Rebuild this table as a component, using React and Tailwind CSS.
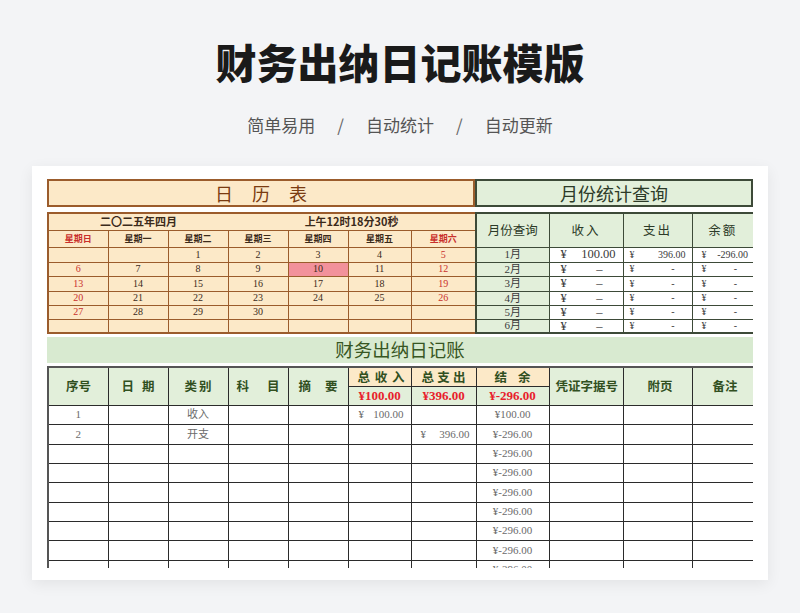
import React from "react";

const cjk = "font-['Noto_Sans_CJK_SC',sans-serif]";
const serif = "font-['Liberation_Serif','Noto_Sans_CJK_SC',serif]";

const weekdays = ["星期日", "星期一", "星期二", "星期三", "星期四", "星期五", "星期六"];
const weeks = [
  ["", "", "1", "2", "3", "4", "5"],
  ["6", "7", "8", "9", "10", "11", "12"],
  ["13", "14", "15", "16", "17", "18", "19"],
  ["20", "21", "22", "23", "24", "25", "26"],
  ["27", "28", "29", "30", "", "", ""],
  ["", "", "", "", "", "", ""],
];
const rowH = ["h-[15px]", "h-[14px]", "h-[15px]", "h-[14px]", "h-[14px]", "h-[14px]"];
const calCols = ["w-[60px]", "w-[60px]", "w-[60px]", "w-[60px]", "w-[60px]", "w-[63px]", "w-[65px]"];
const monthCols = ["w-[73px]", "w-[74px]", "w-[69px]", "w-[62px]"];
const months = ["1月", "2月", "3月", "4月", "5月", "6月"];

const Calendar = () => {
  return (
    <div className="w-[428px]">
      <div className="h-[28px] border-2 border-[#9b5c2c] bg-[#fce9c8] flex items-center justify-center gap-[19px] text-[18px] text-[#7a3b10]">
        <span>日</span>
        <span>历</span>
        <span>表</span>
      </div>
      <table className="mt-[5px] w-[428px] table-fixed border-collapse border-2 border-[#9b5c2c] bg-[#fce9c8]">
        <colgroup>
          {calCols.map((c, i) => (
            <col key={i} className={c} />
          ))}
        </colgroup>
        <tbody>
          <tr className="h-[17px]">
            <td colSpan={7} className="border border-[#9b5c2c] p-0">
              <div className="flex text-[11px] font-bold text-[#3b2a1a] leading-none">
                <div className="w-[180px] text-center">二〇二五年四月</div>
                <div className="w-[248px] text-center">上午12时18分30秒</div>
              </div>
            </td>
          </tr>
          <tr className="h-[17px]">
            {weekdays.map((w, i) => (
              <td
                key={w}
                className={`border border-[#9b5c2c] p-0 text-center text-[9px] font-bold leading-none ${
                  i === 0 || i === 6 ? "text-[#c9302c]" : "text-[#3b2a1a]"
                }`}
              >
                {w}
              </td>
            ))}
          </tr>
          {weeks.map((wk, r) => (
            <tr key={r} className={rowH[r]}>
              {wk.map((d, i) => (
                <td
                  key={i}
                  className={`border border-[#9b5c2c] p-0 text-center text-[10px] leading-none ${serif} ${
                    i === 0 || i === 6 ? "text-[#c9302c]" : "text-[#3b2a1a]"
                  } ${d === "10" ? "bg-[#f2919b]" : ""}`}
                >
                  {d}
                </td>
              ))}
            </tr>
          ))}
        </tbody>
      </table>
    </div>
  );
};

const Money = ({ left, right, className, pl, pr }) => (
  <div className={`flex items-center justify-between ${pl} ${pr} ${className}`}>
    <span>{left}</span>
    <span>{right}</span>
  </div>
);

const MonthStats = () => {
  return (
    <div className="w-[278px]">
      <div className="h-[28px] border-2 border-[#3d4a38] bg-[#e2efda] flex items-center justify-center text-[18px] text-[#2c3a28]">
        月份统计查询
      </div>
      <table className="mt-[5px] w-[278px] table-fixed border-collapse border-2 border-[#3d4a38]">
        <colgroup>
          {monthCols.map((c, i) => (
            <col key={i} className={c} />
          ))}
        </colgroup>
        <tbody>
          <tr className="h-[34px] bg-[#e2efda] text-[12.5px] text-[#2c3a28]">
            <td className="border border-[#3d4a38] p-0 text-center">月份查询</td>
            <td className="border border-[#3d4a38] p-0 text-center tracking-[2px]">收入</td>
            <td className="border border-[#3d4a38] p-0 text-center tracking-[2px]">支出</td>
            <td className="border border-[#3d4a38] p-0 text-center tracking-[2px]">余额</td>
          </tr>
          {months.map((m, r) => (
            <tr key={m} className={`${rowH[r]} leading-none text-[#3a3a3a] ${serif}`}>
              <td className="border border-[#3d4a38] bg-[#e2efda] p-0 text-center text-[11px]">{m}</td>
              <td className="border border-[#3d4a38] bg-white p-0">
                <Money
                  left="¥"
                  right={r === 0 ? "100.00" : "–"}
                  pl="pl-[11px]"
                  pr={r === 0 ? "pr-[7px]" : "pr-[20px]"}
                  className="text-[12.5px]"
                />
              </td>
              <td className="border border-[#3d4a38] bg-white p-0">
                <Money
                  left="¥"
                  right={r === 0 ? "396.00" : "-"}
                  pl="pl-[6px]"
                  pr={r === 0 ? "pr-[6px]" : "pr-[17px]"}
                  className="text-[10px]"
                />
              </td>
              <td className="border border-[#3d4a38] bg-white p-0">
                <Money
                  left="¥"
                  right={r === 0 ? "-296.00" : "-"}
                  pl="pl-[9px]"
                  pr={r === 0 ? "pr-[5px]" : "pr-[16px]"}
                  className="text-[10px]"
                />
              </td>
            </tr>
          ))}
        </tbody>
      </table>
    </div>
  );
};

const jCols = [
  "w-[60px]", "w-[60px]", "w-[60px]", "w-[60px]", "w-[60px]", "w-[63px]",
  "w-[65px]", "w-[73px]", "w-[74px]", "w-[69px]", "w-[62px]",
];
const jRows = [
  { no: "1", kind: "收入", income: "100.00", out: "", bal: "¥100.00" },
  { no: "2", kind: "开支", income: "", out: "396.00", bal: "¥-296.00" },
  { no: "", kind: "", income: "", out: "", bal: "¥-296.00" },
  { no: "", kind: "", income: "", out: "", bal: "¥-296.00" },
  { no: "", kind: "", income: "", out: "", bal: "¥-296.00" },
  { no: "", kind: "", income: "", out: "", bal: "¥-296.00" },
  { no: "", kind: "", income: "", out: "", bal: "¥-296.00" },
  { no: "", kind: "", income: "", out: "", bal: "¥-296.00" },
  { no: "", kind: "", income: "", out: "", bal: "¥-296.00" },
];
const jRowH = ["h-[19px]", "h-[20px]", "h-[19px]", "h-[19px]", "h-[20px]", "h-[19px]", "h-[19px]", "h-[20px]", "h-[19px]"];

const Head = ({ children, px, span = 2, bg = "bg-[#e2efda]" }) => (
  <td rowSpan={span} className={`border border-[#2b2b2b] ${bg} p-0 text-[12.5px] font-semibold text-[#31501f] leading-none whitespace-nowrap`}>
    <div className={`flex justify-between ${px}`}>{children}</div>
  </td>
);

const Journal = () => {
  const cell = "border border-[#2b2b2b] p-0";
  return (
    <div className="mt-[3px]">
      <div className="h-[26px] bg-[#d8ead0] flex items-center justify-center text-[18.5px] text-[#375623]">
        财务出纳日记账
      </div>
      <table className="mt-[3px] w-[706px] table-fixed border-collapse border-2 border-[#555]">
        <colgroup>
          {jCols.map((c, i) => (
            <col key={i} className={c} />
          ))}
        </colgroup>
        <tbody>
          <tr className="h-[19px]">
            <Head px="px-[17px]"><span>序</span><span>号</span></Head>
            <Head px="px-[13px]"><span>日</span><span>期</span></Head>
            <Head px="px-[16px]"><span>类</span><span>别</span></Head>
            <Head px="px-[8px]"><span>科</span><span>目</span></Head>
            <Head px="px-[10px]"><span>摘</span><span>要</span></Head>
            <Head span={1} bg="bg-[#fce9c8]" px="pl-[9px] pr-[6px]"><span>总</span><span>收</span><span>入</span></Head>
            <Head span={1} bg="bg-[#fce9c8]" px="px-[10px]"><span>总</span><span>支</span><span>出</span></Head>
            <Head span={1} bg="bg-[#fce9c8]" px="px-[18px]"><span>结</span><span>余</span></Head>
            <Head px="pl-[6px] pr-[4px]"><span>凭证字据号</span></Head>
            <Head px="px-[24px]"><span>附</span><span>页</span></Head>
            <Head px="px-[20px]"><span>备</span><span>注</span></Head>
          </tr>
          <tr className="h-[19px] bg-[#e2efda]">
            {["¥100.00", "¥396.00", "¥-296.00"].map((v) => (
              <td key={v} className={`${cell} text-center text-[13px] font-bold text-[#e8202a] leading-none ${serif}`}>
                {v}
              </td>
            ))}
          </tr>
          {jRows.map((r, i) => (
            <tr key={i} className={`${jRowH[i]} text-[11px] text-[#6b6b6b] leading-none ${serif}`}>
              <td className={`${cell} text-center`}>{r.no}</td>
              <td className={cell}></td>
              <td className={`${cell} text-center`}>{r.kind}</td>
              <td className={cell}></td>
              <td className={cell}></td>
              <td className={cell}>
                {r.income && <Money left="¥" right={r.income} pl="pl-[10px]" pr="pr-[7px]" className="" />}
              </td>
              <td className={cell}>
                {r.out && <Money left="¥" right={r.out} pl="pl-[9px]" pr="pr-[6px]" className="" />}
              </td>
              <td className={`${cell} text-center`}>{r.bal}</td>
              <td className={cell}></td>
              <td className={cell}></td>
              <td className={cell}></td>
            </tr>
          ))}
        </tbody>
      </table>
    </div>
  );
};

export default function App() {
  return (
    <div className={`w-[800px] h-[613px] overflow-hidden bg-[#f3f4f6] flex flex-col items-center ${cjk}`}>
      <h1 className="mt-[40px] h-[42px] text-[41px] leading-[42px] font-black text-[#1a1a1a]">财务出纳日记账模版</h1>
      <div className="mt-[34px] flex items-center text-[17px] leading-[17px] text-[#555]">
        <span>简单易用</span>
        <span className="mx-[22px] text-[#666]">/</span>
        <span>自动统计</span>
        <span className="mx-[22px] text-[#666]">/</span>
        <span>自动更新</span>
      </div>
      <div className="mt-[33px] w-[736px] bg-white px-[15px] pt-[13px] pb-[12px] shadow-[0_4px_14px_rgba(0,0,0,0.07)]">
        <div className="h-[389px] overflow-hidden">
          <div className="flex">
            <Calendar />
            <MonthStats />
          </div>
          <Journal />
        </div>
      </div>
    </div>
  );
}
